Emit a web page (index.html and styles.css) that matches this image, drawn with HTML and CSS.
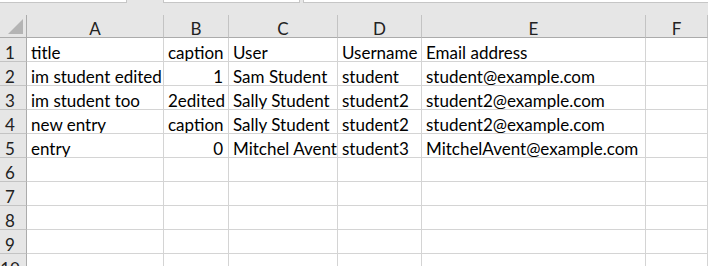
FILE: index.html
```html
<!DOCTYPE html>
<html>
<head>
<meta charset="utf-8">
<link rel="stylesheet" href="styles.css">
</head>
<body>
<div class="tabs">
  <div class="tab tab-1"></div>
  <div class="tab-gap gap-1"></div>
  <div class="tab tab-2"></div>
  <div class="tab-gap gap-2"></div>
  <div class="tab tab-3"></div>
</div>
<div class="spacer"></div>
<div class="sheet">
  <div class="corner"><span class="tri"></span></div>
  <div class="colhead">A</div>
  <div class="colhead">B</div>
  <div class="colhead">C</div>
  <div class="colhead">D</div>
  <div class="colhead">E</div>
  <div class="colhead">F</div>

  <div class="rowhead">1</div>
  <div class="cell">title</div>
  <div class="cell">caption</div>
  <div class="cell">User</div>
  <div class="cell">Username</div>
  <div class="cell">Email address</div>
  <div class="cell"></div>

  <div class="rowhead">2</div>
  <div class="cell">im student edited</div>
  <div class="cell num">1</div>
  <div class="cell">Sam Student</div>
  <div class="cell">student</div>
  <div class="cell">student@example.com</div>
  <div class="cell"></div>

  <div class="rowhead">3</div>
  <div class="cell">im student too</div>
  <div class="cell">2edited</div>
  <div class="cell">Sally Student</div>
  <div class="cell">student2</div>
  <div class="cell">student2@example.com</div>
  <div class="cell"></div>

  <div class="rowhead">4</div>
  <div class="cell">new entry</div>
  <div class="cell">caption</div>
  <div class="cell">Sally Student</div>
  <div class="cell">student2</div>
  <div class="cell">student2@example.com</div>
  <div class="cell"></div>

  <div class="rowhead">5</div>
  <div class="cell">entry</div>
  <div class="cell num">0</div>
  <div class="cell">Mitchel Avent</div>
  <div class="cell">student3</div>
  <div class="cell">MitchelAvent@example.com</div>
  <div class="cell"></div>

  <div class="rowhead">6</div>
  <div class="cell"></div><div class="cell"></div><div class="cell"></div><div class="cell"></div><div class="cell"></div><div class="cell"></div>
  <div class="rowhead">7</div>
  <div class="cell"></div><div class="cell"></div><div class="cell"></div><div class="cell"></div><div class="cell"></div><div class="cell"></div>
  <div class="rowhead">8</div>
  <div class="cell"></div><div class="cell"></div><div class="cell"></div><div class="cell"></div><div class="cell"></div><div class="cell"></div>
  <div class="rowhead">9</div>
  <div class="cell"></div><div class="cell"></div><div class="cell"></div><div class="cell"></div><div class="cell"></div><div class="cell"></div>
  <div class="rowhead">10</div>
  <div class="cell"></div><div class="cell"></div><div class="cell"></div><div class="cell"></div><div class="cell"></div><div class="cell"></div>
</div>
</body>
</html>
```

FILE: styles.css
```css
html, body {
  margin: 0;
  padding: 0;
  background: #e6e6e6;
  overflow: hidden;
}
body {
  width: 708px;
  height: 266px;
  font-family: "Lato", "Liberation Sans", sans-serif;
  font-size: 17px;
  color: #000;
}
.tabs {
  display: flex;
  height: 3px;
}
.tab {
  box-sizing: border-box;
  height: 3px;
  background: #fff;
  border-bottom: 1px solid #c6c6c6;
  border-right: 1px solid #c6c6c6;
}
.tab-1 { width: 127px; }
.gap-1 { width: 36px; }
.tab-2 { width: 137px; border-left: 1px solid #c6c6c6; }
.gap-2 { width: 3px; }
.tab-3 { flex: 1; border-left: 1px solid #c6c6c6; border-right: none; }
.spacer { height: 12px; }
.sheet {
  display: grid;
  grid-template-columns: 27px 137px 65px 109px 84px 224px 1fr;
  grid-template-rows: 23px repeat(10, 24px);
}
.corner, .colhead, .rowhead, .cell {
  box-sizing: border-box;
  border-right: 1px solid #d4d4d4;
  border-bottom: 1px solid #d4d4d4;
  white-space: nowrap;
  overflow: hidden;
}
.corner {
  position: relative;
  background: #e6e6e6;
  border-right-color: #ababab;
  border-bottom-color: #ababab;
}
.tri {
  position: absolute;
  left: 8px;
  top: 4px;
  width: 0;
  height: 0;
  border-style: solid;
  border-width: 0 0 15px 15px;
  border-color: transparent transparent #b4b4b4 transparent;
}
.colhead {
  background: #e6e6e6;
  border-right-color: #c3c3c3;
  border-bottom-color: #ababab;
  text-align: center;
  line-height: 27px;
  color: #222;
}
.rowhead {
  background: #e6e6e6;
  border-right-color: #ababab;
  border-bottom-color: #c3c3c3;
  text-align: center;
  padding-right: 6px;
  line-height: 29px;
  color: #222;
}
.cell {
  background: #fff;
  padding: 0 5px 0 4px;
  line-height: 29px;
}
.num { text-align: right; }
```
